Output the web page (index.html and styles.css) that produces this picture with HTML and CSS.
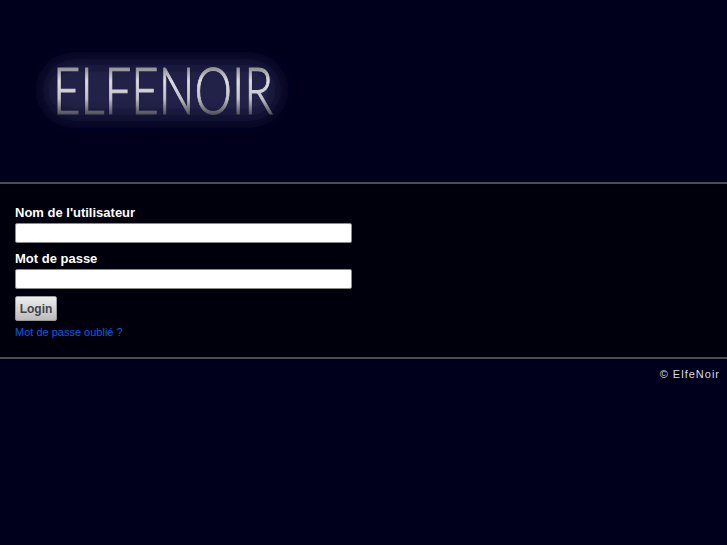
FILE: index.html
```html
<!DOCTYPE html>
<html lang="fr">
<head>
<meta charset="utf-8">
<title>ElfeNoir</title>
<link rel="stylesheet" href="styles.css">
</head>
<body>
<header class="header">
  <svg class="logo" width="290" height="100" viewBox="0 0 290 100" role="img" aria-label="ElfeNoir">
    <defs>
      <linearGradient id="metal" gradientUnits="userSpaceOnUse" x1="0" y1="26" x2="0" y2="76">
        <stop offset="0" stop-color="#85868c"/>
        <stop offset="0.3" stop-color="#dedee2"/>
        <stop offset="0.65" stop-color="#c4c4ca"/>
        <stop offset="1" stop-color="#44444e"/>
      </linearGradient>
      <filter id="glow" x="-20%" y="-50%" width="140%" height="200%">
        <feGaussianBlur stdDeviation="9"/>
      </filter>
    </defs>
    <rect class="logo-glow" x="26" y="22" width="232" height="56" rx="24" filter="url(#glow)"/>
    <text class="logo-text" x="33" y="74" textLength="220" lengthAdjust="spacingAndGlyphs">ELFENOIR</text>
  </svg>
</header>
<main class="main">
  <form class="form">
    <label class="label" for="user">Nom de l'utilisateur</label>
    <input class="input" id="user" type="text">
    <label class="label" for="pass">Mot de passe</label>
    <input class="input" id="pass" type="password">
    <button class="button" type="button">Login</button>
    <a class="link" href="#">Mot de passe oublié ?</a>
  </form>
</main>
<footer class="footer">© ElfeNoir</footer>
</body>
</html>
```
FILE: styles.css
```css
html, body {
  margin: 0;
  padding: 0;
  height: 100%;
}
body {
  background: #00001c;
  font-family: "Liberation Sans", Arial, sans-serif;
  color: #fff;
}
.header {
  height: 182px;
  box-sizing: border-box;
  padding: 40px 0 0 20px;
}
.logo {
  display: block;
}
.logo-glow {
  fill: #20204a;
}
.logo-text {
  font-family: Lato, "Liberation Sans", sans-serif;
  font-weight: 300;
  font-size: 66px;
  fill: url(#metal);
  stroke: url(#metal);
  stroke-width: 1px;
}
.main {
  background: #00000c;
  border-top: 2px solid #4c4c4c;
  border-bottom: 2px solid #4c4c4c;
  height: 177px;
  box-sizing: border-box;
  padding: 20px 15px 0;
}
.form {
  display: flex;
  flex-direction: column;
  align-items: flex-start;
}
.label {
  font-size: 13px;
  line-height: 17px;
  font-weight: bold;
  margin-bottom: 2px;
}
.input {
  width: 337px;
  height: 20px;
  box-sizing: border-box;
  margin: 0 0 7px;
  padding: 0 4px;
  background: #fff;
  border: 1px solid #8a8a8a;
  border-radius: 2px;
}
.button {
  width: 42px;
  height: 25px;
  margin: 0 0 4px;
  padding: 0;
  font: bold 12px "Liberation Sans", Arial, sans-serif;
  color: #444;
  background: linear-gradient(#eee, #bbb);
  border: 1px solid #999;
  border-radius: 2px;
}
.link {
  font-size: 11px;
  line-height: 14px;
  color: #0a5ce0;
  text-decoration: none;
}
.footer {
  padding: 8px 7px 0 0;
  text-align: right;
  font-size: 11px;
  line-height: 14px;
  letter-spacing: 1px;
  color: #ddd;
}
```
